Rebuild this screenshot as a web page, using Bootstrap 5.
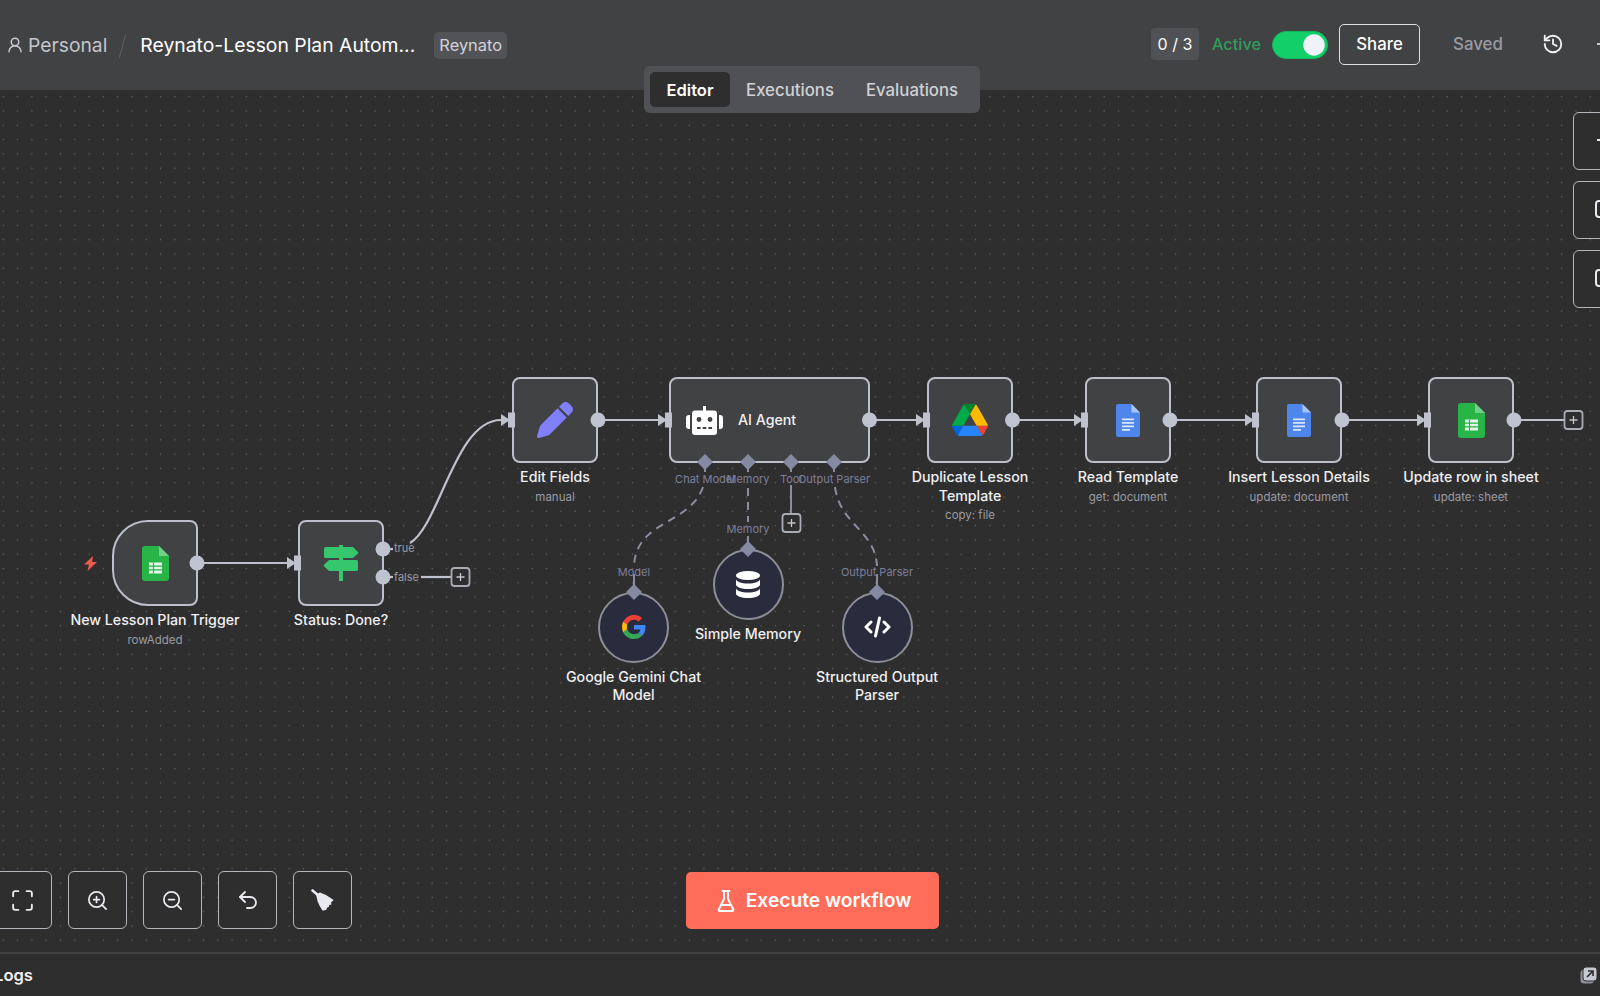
<!DOCTYPE html>
<html lang="en">
<head>
<meta charset="utf-8">
<title>Reynato-Lesson Plan Automation</title>
<link href="https://cdn.jsdelivr.net/npm/bootstrap@5.3.0/dist/css/bootstrap.min.css" rel="stylesheet">
<style>
body{font-family:Inter,"Liberation Sans",sans-serif;background:#2e2e2e;color:#fff;font-size:16px;}
.wf-head{height:90px;flex:none;background:#414244;padding-left:6px;position:relative;}
.wf-person{width:18px;height:18px;margin-right:4px;color:#c9cad0;}
.wf-project{font-size:19.3px;color:#c4c5cb;margin-top:1px;}
.wf-slash{width:1px;height:24px;background:#5e5f62;transform:rotate(15deg);margin:2px 17px 0 15px;}
.wf-title{font-size:19.35px;color:#fff;font-weight:400;width:275px;white-space:nowrap;margin-top:1px;}
.wf-tag{background:#525356;color:#d3d4da;font-size:16.4px;font-weight:400;border-radius:5px;padding:0 5px;height:27px;line-height:27px;margin-left:19px;}
.wf-right{margin-bottom:2px;}
.wf-count{background:#505154;border-radius:4px;width:48px;height:32px;line-height:32px;text-align:center;font-size:16px;color:#fff;}
.wf-active{color:#2f9c5e;font-size:16.3px;font-weight:500;margin-left:13px;}
.wf-switch{margin:2px 0 0 11px;padding:0;min-height:0;display:flex;}
.wf-switch .form-check-input{width:56px;height:28px;margin:0;background-color:#13cf6a;border:1px solid #0fb85c;box-shadow:none;
 background-image:url("data:image/svg+xml,%3csvg xmlns='http://www.w3.org/2000/svg' viewBox='-4 -4 8 8'%3e%3ccircle r='3.3' fill='%23f0f2fa'/%3e%3c/svg%3e");}
.wf-share{margin-left:11px;width:81px;height:41px;padding:2px 0 0;color:#fff;font-weight:500;font-size:16.8px;border:1px solid #dcdde2;border-radius:5px;}
.wf-saved{margin:2px 0 0 33px;color:#9a9ba1;font-weight:500;font-size:16.9px;}
.wf-hist{margin-left:39px;width:22px;height:22px;color:#f2f2f5;}
.wf-dash{margin-left:33px;width:3px;height:2px;background:#c9cad0;}
.wf-canvas{min-height:0;background-color:#2e2e2e;
 background-image:radial-gradient(circle at center,#666 0,#666 .7px,transparent 1px);
 background-size:14.31px 14.31px;background-position:-3.85px -.45px;}
.wf-tabs{position:absolute;top:-24px;left:644px;width:336px;height:47px;background:#505154;border-radius:6px;padding:6px;gap:0;z-index:3;flex-wrap:nowrap;}
.wf-tabs .nav-link{color:#cfd0d6;font-weight:500;font-size:16.8px;padding:0;height:35px;line-height:37px;text-align:center;border-radius:5px;}
.wf-tabs .nav-link.active{background:#2e2e2e;color:#fff;font-weight:600;font-size:16.5px;width:80px;}
.wf-tabs .wf-tab-b{width:120px;}
.wf-tabs .wf-tab-c{width:124px;}
.wf-graph{position:absolute;left:0;top:0;width:1600px;height:862px;z-index:2;pointer-events:none;}
.wf-node{position:absolute;width:86px;height:86px;background:#414244;border:2px solid #bdc0ca;border-radius:8px;z-index:1;}
.wf-node.is-wide{width:201px;justify-content:flex-start;padding-left:15px;}
.wf-node.is-trigger{border-radius:36px 8px 8px 36px;}
.wf-round{position:absolute;width:71px;height:71px;border-radius:50%;background:#2a2b3c;border:2px solid #8e8e99;z-index:1;}
.wf-cap{position:absolute;top:100%;left:50%;transform:translateX(-50%);width:190px;text-align:center;padding-top:7px;font-size:14.2px;line-height:18.6px;font-weight:500;color:#f0f0f3;}
.wf-round .wf-cap{width:160px;padding-top:7px;}
.wf-cap small{display:block;font-size:11.5px;font-weight:400;color:#9a9ba3;line-height:20px;}
.wf-agent-name{font-size:14.2px;font-weight:500;color:#f0f0f3;margin:0 0 0 15px;}
.wf-port{font:400 11px Inter,"Liberation Sans",sans-serif;fill:#7d7f9b;text-anchor:middle;}
.wf-port.is-side{text-anchor:start;fill:#9a9ba3;}
.wf-bolt{position:absolute;left:84px;top:466px;width:13px;height:15px;color:#ef5b4b;}
.wf-tools{position:absolute;left:-7px;top:781px;gap:16px;z-index:3;}
.wf-side{position:absolute;left:1573px;top:22px;gap:11px;z-index:3;}
.wf-tool{width:59px;height:58px;padding:0;border:1px solid #b5b6bb;border-radius:6px;background:#2e2e2e;color:#e9eaf0;display:flex;align-items:center;justify-content:center;}
.wf-tool:hover{background:#2e2e2e;color:#e9eaf0;border-color:#b5b6bb;}
.wf-side .wf-tool{justify-content:flex-start;padding-left:21px;}
.wf-run{position:absolute;left:686px;top:782px;width:253px;height:57px;background:#ff6d5a;border:0;border-radius:5px;color:#fff;font-weight:600;font-size:19.2px;z-index:3;}
.wf-run:hover{background:#ff6d5a;color:#fff;}
.wf-logs{height:44px;flex:none;border-top:2px solid #414244;background:#2e2e2e;padding-right:3px;}
.wf-logs-name{font-weight:600;font-size:16.6px;margin-left:-6px;color:#f1f1f3;}
.wf-stroke{fill:none;stroke:currentColor;stroke-width:2;stroke-linecap:round;stroke-linejoin:round;}
.wf-tool .wf-stroke{stroke-width:1.8;}
</style>
</head>
<body class="d-flex flex-column vh-100 overflow-hidden">
<header class="wf-head d-flex align-items-center">
  <svg class="wf-person" viewBox="0 0 24 24"><g class="wf-stroke"><circle cx="12" cy="8" r="5"/><path d="M20 21a8 8 0 0 0-16 0"/></g></svg>
  <span class="wf-project">Personal</span>
  <span class="wf-slash"></span>
  <span class="wf-title">Reynato-Lesson Plan Autom...</span>
  <span class="badge wf-tag">Reynato</span>
  <div class="d-flex align-items-center ms-auto wf-right">
    <span class="wf-count">0 / 3</span>
    <span class="wf-active">Active</span>
    <div class="form-check form-switch wf-switch"><input class="form-check-input" type="checkbox" role="switch" checked aria-label="Active"></div>
    <button class="btn wf-share" type="button">Share</button>
    <span class="wf-saved">Saved</span>
    <svg class="wf-hist" viewBox="0 0 24 24"><g class="wf-stroke"><path d="M3 12a9 9 0 1 0 9-9 9.75 9.75 0 0 0-6.74 2.74L3 8"/><path d="M3 3v5h5"/><path d="M12 7v5l4 2"/></g></svg>
    <span class="wf-dash"></span>
  </div>
</header>

<main class="wf-canvas flex-grow-1 position-relative">
  <ul class="nav nav-pills wf-tabs">
    <li class="nav-item"><a class="nav-link active" href="#">Editor</a></li>
    <li class="nav-item wf-tab-b"><a class="nav-link" href="#">Executions</a></li>
    <li class="nav-item wf-tab-c"><a class="nav-link" href="#">Evaluations</a></li>
  </ul>

  <svg class="wf-bolt" viewBox="0 0 13 15"><path fill="currentColor" d="M9 0 0 8.500h5L3.500 15 13 6H8z"/></svg>

  <!-- nodes -->
  <div class="wf-node is-trigger d-flex align-items-center justify-content-center" style="left:112px;top:430px">
    <svg width="27" height="35" viewBox="0 0 27 35"><path fill="#28b446" d="M3 0h14l10 10v22a3 3 0 0 1-3 3H3a3 3 0 0 1-3-3V3a3 3 0 0 1 3-3z"/><path fill="#72d08a" d="M17 0l10 10H17z"/><path fill="#e6f5ea" d="M7 16.500h13v11H7z"/><path stroke="#28b446" stroke-width="1.200" d="M7 20.200h13M7 23.800h13M11.500 16.500v11"/></svg>
    <div class="wf-cap">New Lesson Plan Trigger<small>rowAdded</small></div>
  </div>
  <div class="wf-node d-flex align-items-center justify-content-center" style="left:298px;top:430px">
    <svg width="36" height="36" viewBox="0 0 36 36"><path fill="#35c66e" d="M16 0h4v36h-4z"/><path fill="#35c66e" d="M2.500 2h27a1 1 0 0 1 .7.3L35 7a1 1 0 0 1 0 1.400l-4.800 4.300a1 1 0 0 1-.7.300h-27A1.500 1.500 0 0 1 1 11.500v-8A1.500 1.500 0 0 1 2.500 2z"/><path fill="#35c66e" d="M33.500 15h-27a1 1 0 0 0-.7.3L1 19.800a1 1 0 0 0 0 1.400l4.800 4.500a1 1 0 0 0 .7.300h27A1.500 1.500 0 0 0 35 24.500v-8A1.500 1.500 0 0 0 33.500 15z"/><path fill="#414244" d="M0 13h36v2H0z"/><path fill="#35c66e" d="M16 13h4v2h-4z"/></svg>
    <div class="wf-cap">Status: Done?</div>
  </div>
  <div class="wf-node d-flex align-items-center justify-content-center" style="left:512px;top:287px">
    <svg width="36" height="36" viewBox="0 0 512 512"><path fill="#8080ff" d="M362.700 19.300L314.300 67.700 444.300 197.700l48.400-48.400c25-25 25-65.500 0-90.500L453.300 19.300c-25-25-65.500-25-90.500 0zm-71 71L58.600 323.500c-10.400 10.400-18 23.300-22.200 37.400L1 481.200C-1.500 489.700 .8 498.800 7 505s15.300 8.500 23.700 6.100l120.300-35.400c14.100-4.200 27-11.800 37.400-22.200L421.700 220.300 291.700 90.300z"/></svg>
    <div class="wf-cap">Edit Fields<small>manual</small></div>
  </div>
  <div class="wf-node is-wide d-flex align-items-center" style="left:669px;top:287px">
    <svg width="37" height="29" viewBox="0 0 37 29"><path fill="#fff" d="M17 0h3v5h-3zM9 4.500h19a3 3 0 0 1 3 3V26a3 3 0 0 1-3 3H9a3 3 0 0 1-3-3V7.500a3 3 0 0 1 3-3zM0 12a3 3 0 0 1 3-3h1v14H3a3 3 0 0 1-3-3zM33 9h1a3 3 0 0 1 3 3v8a3 3 0 0 1-3 3h-1z"/><circle cx="13" cy="13.500" r="2.400" fill="#414244"/><circle cx="24" cy="13.500" r="2.400" fill="#414244"/><path fill="#414244" d="M11 21h3.600v2H11zM16.700 21h3.600v2h-3.600zM22.400 21H26v2h-3.600z"/></svg>
    <span class="wf-agent-name">AI Agent</span>
  </div>
  <div class="wf-node d-flex align-items-center justify-content-center" style="left:927px;top:287px">
    <svg width="36" height="32" viewBox="0 0 87.300 78"><path d="m6.600 66.850 3.850 6.650c.8 1.400 1.950 2.500 3.300 3.300l13.750-23.800h-27.500c0 1.550.4 3.100 1.200 4.500z" fill="#0066da"/><path d="m43.650 25-13.750-23.800c-1.350.8-2.500 1.900-3.300 3.300l-25.400 44a9.060 9.060 0 0 0 -1.200 4.500h27.500z" fill="#00ac47"/><path d="m73.550 76.800c1.350-.8 2.500-1.900 3.300-3.300l1.600-2.750 7.650-13.250c.8-1.400 1.200-2.950 1.200-4.500h-27.502l5.852 11.500z" fill="#ea4335"/><path d="m43.650 25 13.750-23.800c-1.350-.8-2.900-1.200-4.500-1.200h-18.500c-1.600 0-3.150.45-4.500 1.200z" fill="#00832d"/><path d="m59.800 53h-32.300l-13.750 23.800c1.350.8 2.900 1.200 4.500 1.200h50.800c1.600 0 3.150-.45 4.500-1.200z" fill="#2684fc"/><path d="m73.400 26.500-12.700-22c-.8-1.400-1.950-2.500-3.300-3.300l-13.750 23.800 16.150 28h27.450c0-1.550-.4-3.100-1.200-4.500z" fill="#ffba00"/></svg>
    <div class="wf-cap">Duplicate Lesson<br>Template<small>copy: file</small></div>
  </div>
  <div class="wf-node d-flex align-items-center justify-content-center" style="left:1085px;top:287px">
    <svg width="24" height="33" viewBox="0 0 24 33"><path fill="#4e86ec" d="M2 0h13.500L24 8.500V31a2 2 0 0 1-2 2H2a2 2 0 0 1-2-2V2a2 2 0 0 1 2-2z"/><path fill="#a6c5fa" d="M15.500 0L24 8.500h-8.500z"/><path fill="#dbe7fd" d="M6 14.500h12v1.700H6zM6 18h12v1.700H6zM6 21.500h12v1.700H6zM6 25h8v1.700H6z"/></svg>
    <div class="wf-cap">Read Template<small>get: document</small></div>
  </div>
  <div class="wf-node d-flex align-items-center justify-content-center" style="left:1256px;top:287px">
    <svg width="24" height="33" viewBox="0 0 24 33"><path fill="#4e86ec" d="M2 0h13.500L24 8.500V31a2 2 0 0 1-2 2H2a2 2 0 0 1-2-2V2a2 2 0 0 1 2-2z"/><path fill="#a6c5fa" d="M15.500 0L24 8.500h-8.500z"/><path fill="#dbe7fd" d="M6 14.500h12v1.700H6zM6 18h12v1.700H6zM6 21.500h12v1.700H6zM6 25h8v1.700H6z"/></svg>
    <div class="wf-cap">Insert Lesson Details<small>update: document</small></div>
  </div>
  <div class="wf-node d-flex align-items-center justify-content-center" style="left:1428px;top:287px">
    <svg width="27" height="35" viewBox="0 0 27 35"><path fill="#28b446" d="M3 0h14l10 10v22a3 3 0 0 1-3 3H3a3 3 0 0 1-3-3V3a3 3 0 0 1 3-3z"/><path fill="#72d08a" d="M17 0l10 10H17z"/><path fill="#e6f5ea" d="M7 16.500h13v11H7z"/><path stroke="#28b446" stroke-width="1.200" d="M7 20.200h13M7 23.800h13M11.500 16.500v11"/></svg>
    <div class="wf-cap">Update row in sheet<small>update: sheet</small></div>
  </div>

  <div class="wf-round d-flex align-items-center justify-content-center" style="left:598px;top:501.500px">
    <svg width="24" height="24" viewBox="0 0 48 48"><path fill="#EA4335" d="M24 9.500c3.540 0 6.710 1.220 9.210 3.600l6.850-6.850C35.900 2.380 30.470 0 24 0 14.620 0 6.510 5.380 2.560 13.220l7.980 6.190C12.430 13.720 17.740 9.500 24 9.500z"/><path fill="#4285F4" d="M46.980 24.550c0-1.570-.15-3.090-.38-4.550H24v9.020h12.940c-.58 2.960-2.260 5.480-4.780 7.180l7.730 6c4.510-4.180 7.090-10.360 7.090-17.650z"/><path fill="#FBBC05" d="M10.530 28.590c-.48-1.450-.76-2.990-.76-4.590s.27-3.140.76-4.590l-7.980-6.190C.92 16.460 0 20.120 0 24c0 3.880.92 7.540 2.560 10.780l7.970-6.190z"/><path fill="#34A853" d="M24 48c6.480 0 11.930-2.130 15.890-5.810l-7.730-6c-2.150 1.450-4.920 2.300-8.160 2.300-6.260 0-11.570-4.220-13.470-9.910l-7.980 6.190C6.510 42.620 14.620 48 24 48z"/></svg>
    <div class="wf-cap">Google Gemini Chat<br>Model</div>
  </div>
  <div class="wf-round d-flex align-items-center justify-content-center" style="left:712.500px;top:458.500px">
    <svg width="24" height="27" viewBox="0 0 24 27"><g fill="#fff"><ellipse cx="12" cy="4.500" rx="12" ry="4.500"/><path d="M0 8c0 2.500 5.400 4.500 12 4.500S24 10.500 24 8v5.500c0 2.500-5.400 4.500-12 4.500S0 16 0 13.500z"/><path d="M0 17c0 2.500 5.400 4.500 12 4.500s12-2 12-4.500v5.500c0 2.500-5.400 4.500-12 4.500S0 25 0 22.500z"/></g></svg>
    <div class="wf-cap">Simple Memory</div>
  </div>
  <div class="wf-round d-flex align-items-center justify-content-center" style="left:841.500px;top:501.500px">
    <svg width="27" height="22" viewBox="0 0 27 22"><path fill="none" stroke="#fff" stroke-width="3" stroke-linecap="round" stroke-linejoin="round" d="M7 6l-5 5 5 5M20 6l5 5-5 5M15.500 2l-4 18"/></svg>
    <div class="wf-cap">Structured Output<br>Parser</div>
  </div>

  <!-- edges, handles and port labels -->
  <svg class="wf-graph" viewBox="0 90 1600 862">
    <defs>
      <g id="wf-in"><path fill="#bfc2cc" d="M-11-6 -2 0-11 6z"/><rect x="-4" y="-7.500" width="7" height="15" fill="#bfc2cc"/></g>
      <path id="wf-dia" fill="#858aa2" d="M0-8 8 0 0 8-8 0z"/>
      <g id="wf-plus"><rect x="-9" y="-9" width="18" height="18" rx="3" fill="#2e2e2e" stroke="#a9abb5" stroke-width="1.800"/><path d="M-4 0H4M0-4V4" stroke="#c6c7cf" stroke-width="1.300"/></g>
    </defs>
    <g fill="none" stroke="#bfc2cc" stroke-width="2.200">
      <path d="M197 563H287"/>
      <path d="M383 549H393"/>
      <path d="M410 543C440 525 455 420 501 420"/>
      <path d="M383 577H393"/>
      <path d="M421 577H451"/>
      <path d="M598 420H658"/>
      <path d="M869.500 420H916"/>
      <path d="M1012 420H1074"/>
      <path d="M1170 420H1245"/>
      <path d="M1342 420H1417"/>
      <path d="M1514 420H1565"/>
    </g>
    <g fill="none" stroke="#8b8d9e" stroke-width="2">
      <path d="M705 462V472M748 462V472M791 462V472M834 462V472"/>
      <path d="M791 485V513"/>
      <path d="M634 574V585M877 574V585M748 536V545"/>
      <path stroke-dasharray="8 6" d="M703 487C690 525 636 520 634 566"/>
      <path stroke-dasharray="8 6" d="M748 488V522"/>
      <path stroke-dasharray="8 6" d="M835 487C840 525 875 530 877 566"/>
    </g>
    <g fill="#bfc3cf">
      <circle cx="197" cy="563" r="7.500"/><circle cx="383" cy="549" r="7.500"/><circle cx="383" cy="577" r="7.500"/>
      <circle cx="598" cy="420" r="7.500"/><circle cx="869.500" cy="420" r="7.500"/><circle cx="1012.500" cy="420" r="7.500"/>
      <circle cx="1170" cy="420" r="7.500"/><circle cx="1342" cy="420" r="7.500"/><circle cx="1514" cy="420" r="7.500"/>
    </g>
    <use href="#wf-in" x="298" y="563"/><use href="#wf-in" x="512" y="420"/><use href="#wf-in" x="669" y="420"/>
    <use href="#wf-in" x="927" y="420"/><use href="#wf-in" x="1085" y="420"/><use href="#wf-in" x="1256" y="420"/><use href="#wf-in" x="1428" y="420"/>
    <use href="#wf-dia" x="705" y="462"/><use href="#wf-dia" x="748" y="462"/><use href="#wf-dia" x="791" y="462"/><use href="#wf-dia" x="834" y="462"/>
    <use href="#wf-dia" x="634" y="592"/><use href="#wf-dia" x="748" y="549"/><use href="#wf-dia" x="877" y="592"/>
    <use href="#wf-plus" x="460.500" y="577"/><use href="#wf-plus" x="791.500" y="523"/><use href="#wf-plus" x="1573.500" y="420"/>
    <text class="wf-port is-side" x="394" y="552">true</text>
    <text class="wf-port is-side" x="394" y="581">false</text>
    <text class="wf-port" x="705" y="483">Chat Model</text>
    <text class="wf-port" x="748" y="483">Memory</text>
    <text class="wf-port" x="791" y="483">Tool</text>
    <text class="wf-port" x="834" y="483">Output Parser</text>
    <text class="wf-port" x="748" y="533">Memory</text>
    <text class="wf-port" x="634" y="576">Model</text>
    <text class="wf-port" x="877" y="576">Output Parser</text>
  </svg>

  <div class="d-flex flex-column wf-side">
    <button class="btn wf-tool" type="button" aria-label="Add node"><svg width="20" height="20" viewBox="0 0 20 20"><path d="M2 9h18" stroke="#e9eaf0" stroke-width="2"/></svg></button>
    <button class="btn wf-tool" type="button" aria-label="Notes"><svg width="20" height="20" viewBox="0 0 20 20"><rect x="1" y="1" width="30" height="16" rx="3" fill="none" stroke="#e9eaf0" stroke-width="2"/></svg></button>
    <button class="btn wf-tool" type="button" aria-label="Templates"><svg width="20" height="20" viewBox="0 0 20 20"><rect x="1" y="1" width="30" height="16" rx="3" fill="none" stroke="#e9eaf0" stroke-width="2"/></svg></button>
  </div>

  <div class="d-flex wf-tools">
    <button class="btn wf-tool" type="button" aria-label="Fit"><svg width="25" height="25" viewBox="0 0 24 24"><g class="wf-stroke"><path d="M8 3H5a2 2 0 0 0-2 2v3"/><path d="M21 8V5a2 2 0 0 0-2-2h-3"/><path d="M3 16v3a2 2 0 0 0 2 2h3"/><path d="M16 21h3a2 2 0 0 0 2-2v-3"/></g></svg></button>
    <button class="btn wf-tool" type="button" aria-label="Zoom in"><svg width="23" height="23" viewBox="0 0 24 24"><g class="wf-stroke"><circle cx="11" cy="11" r="8"/><path d="M21 21l-4.350-4.350"/><path d="M11 8v6M8 11h6"/></g></svg></button>
    <button class="btn wf-tool" type="button" aria-label="Zoom out"><svg width="23" height="23" viewBox="0 0 24 24"><g class="wf-stroke"><circle cx="11" cy="11" r="8"/><path d="M21 21l-4.350-4.350"/><path d="M8 11h6"/></g></svg></button>
    <button class="btn wf-tool" type="button" aria-label="Undo"><svg width="24" height="24" viewBox="0 0 24 24"><g class="wf-stroke"><path d="M9 14 4 9l5-5"/><path d="M4 9h10.500a5.500 5.500 0 0 1 5.500 5.500a5.500 5.500 0 0 1-5.500 5.500H11"/></g></svg></button>
    <button class="btn wf-tool" type="button" aria-label="Tidy up"><svg width="23" height="22" viewBox="0 0 23 22"><path d="M1.500 1.500 8 7" stroke="#e9eaf0" stroke-width="2.600" stroke-linecap="round"/><path fill="#e9eaf0" d="M5 5.500 9 3.500 15 6l7.700 5-2.700 2.500 .5 2-2.300.6-.3 2-2 .6-.5 2.100-3.700 1L9 17.500 6.700 12.700z"/></svg></button>
  </div>

  <button class="btn wf-run d-flex align-items-center justify-content-center gap-2" type="button">
    <svg width="24" height="24" viewBox="0 0 24 24"><g class="wf-stroke"><path d="M10 2v7.527a2 2 0 0 1-.211.896L4.720 20.550a1 1 0 0 0 .9 1.450h12.760a1 1 0 0 0 .9-1.450l-5.069-10.127A2 2 0 0 1 14 9.527V2"/><path d="M8.500 2h7"/><path d="M7 16h10"/></g></svg>
    <span>Execute workflow</span>
  </button>
</main>

<footer class="wf-logs d-flex align-items-center justify-content-between">
  <span class="wf-logs-name">Logs</span>
  <svg width="17" height="17" viewBox="0 0 17 17"><rect x="0.500" y="2.500" width="13.500" height="14" rx="3.500" fill="#8f9098"/><rect x="3" y="0" width="14" height="14" rx="3" fill="#c6c8d2" stroke="#2e2e2e" stroke-width="1"/><path d="M7 10l6-6M8 4h5v5" fill="none" stroke="#2e2e2e" stroke-width="1.600"/></svg>
</footer>
<script src="https://cdn.jsdelivr.net/npm/bootstrap@5.3.0/dist/js/bootstrap.bundle.min.js"></script>
</body>
</html>
